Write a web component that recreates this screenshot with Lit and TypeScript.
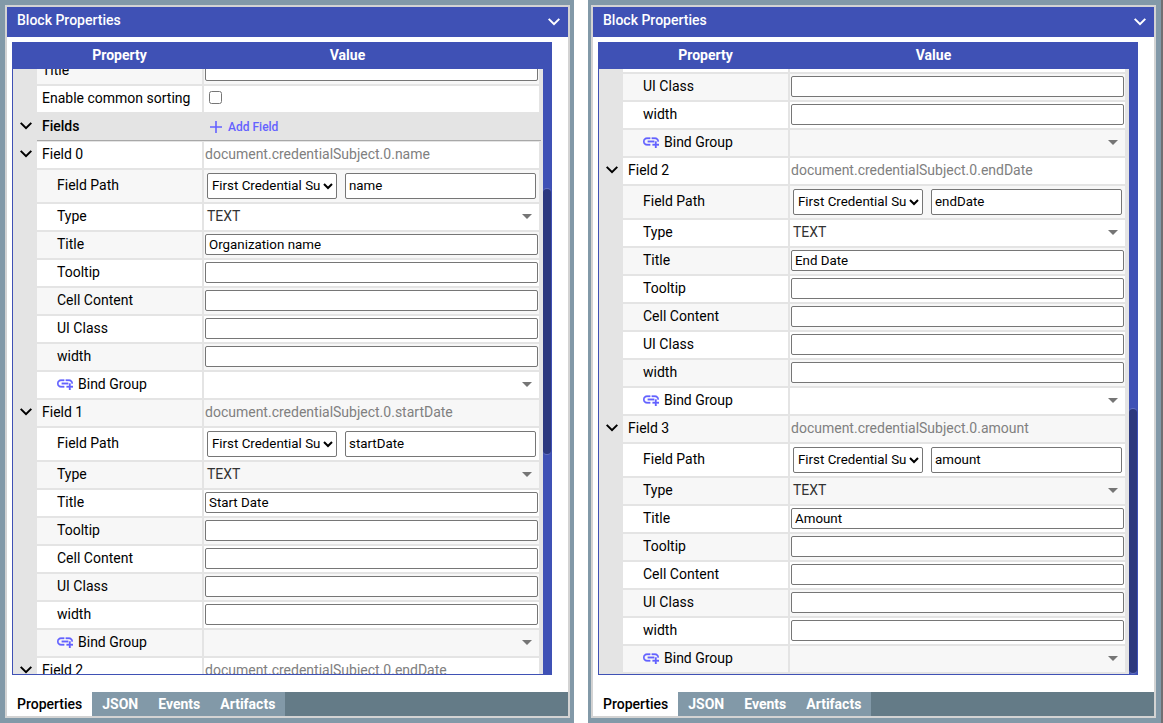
import { LitElement, html, css, nothing } from "lit";
import { customElement, property, state } from "lit/decorators.js";

type Kind = "input" | "check" | "section" | "field" | "path" | "type" | "bind";
interface Row {
  kind: Kind;
  label: string;
  value?: string;
  top?: boolean;
}
interface PanelData {
  id: string;
  rows: Row[];
  scroll: number;
  startWhite: boolean;
  thumbTop: number;
  thumbSize: number;
}

const fieldRows = (index: number, path: string, title: string): Row[] => [
  { kind: "field", label: `Field ${index}`, value: `document.credentialSubject.0.${path}` },
  { kind: "path", label: "Field Path", value: path },
  { kind: "type", label: "Type", value: "TEXT" },
  { kind: "input", label: "Title", value: title },
  { kind: "input", label: "Tooltip" },
  { kind: "input", label: "Cell Content" },
  { kind: "input", label: "UI Class" },
  { kind: "input", label: "width" },
  { kind: "bind", label: "Bind Group" },
];

const PANELS: PanelData[] = [
  {
    id: "left",
    scroll: 11,
    startWhite: false,
    thumbTop: 19.7,
    thumbSize: 44.1,
    rows: [
      { kind: "input", label: "Title", top: true },
      { kind: "check", label: "Enable common sorting", top: true },
      { kind: "section", label: "Fields" },
      ...fieldRows(0, "name", "Organization name"),
      ...fieldRows(1, "startDate", "Start Date"),
      ...fieldRows(2, "endDate", "End Date"),
    ],
  },
  {
    id: "right",
    scroll: 23,
    startWhite: true,
    thumbTop: 56,
    thumbSize: 44,
    rows: [
      ...fieldRows(1, "startDate", "Start Date").slice(5),
      ...fieldRows(2, "endDate", "End Date"),
      ...fieldRows(3, "amount", "Amount"),
    ],
  },
];

const chevron = html`<svg width="12" height="8" viewBox="6 8.4 12 8" aria-hidden="true">
  <path d="M7.41 8.59L12 13.17l4.59-4.58L18 10l-6 6-6-6z" fill="currentColor" />
</svg>`;

@customElement("block-panel")
export class BlockPanel extends LitElement {
  @property({ attribute: false }) data!: PanelData;
  @state() private tab = "Properties";

  static styles = css`
    :host {
      display: flex;
      flex-direction: column;
      min-width: 0;
      box-sizing: border-box;
      border: 2px solid #d3d3d3;
      background: #fff;
      font: 14px/20px Roboto, sans-serif;
      color: #000;
    }
    button {
      font: inherit;
      color: inherit;
      background: none;
      border: 0;
      padding: 0;
      margin: 0;
      cursor: pointer;
    }
    .head {
      display: flex;
      justify-content: space-between;
      align-items: center;
      height: 30px;
      padding: 0 8px 0 10px;
      box-sizing: border-box;
      background: #3f51b5;
      color: #fff;
    }
    .title {
      margin: 0;
      padding-bottom: 4px;
      font-size: 14px;
      font-weight: 500;
    }
    .collapse {
      display: flex;
    }
    .frame {
      flex: 1;
      min-height: 0;
      display: flex;
      flex-direction: column;
      margin: 5px 16px 17px 5px;
      border: solid #3f51b5;
      border-width: 0 0 1px 1px;
    }
    .columns {
      display: grid;
      grid-template-columns: 24px 165px 1fr;
      height: 27px;
      line-height: 27px;
      background: #3f51b5;
      color: #fff;
      font-weight: 700;
      text-align: center;
    }
    .columns .value {
      padding-right: 59px;
    }
    .body {
      flex: 1;
      min-height: 0;
      display: flex;
    }
    .scroller {
      flex: 1;
      min-width: 0;
      overflow-y: auto;
      scrollbar-width: none;
      background: #e4e4e4;
    }
    .track {
      width: 9px;
      background: #3f51b5;
    }
    .thumb {
      width: 8px;
      box-sizing: border-box;
      border-radius: 4px;
      background: #2c387e;
      border: solid #6573c3;
      border-width: 1px 0;
    }
    table,
    tbody {
      display: block;
    }
    tr {
      display: grid;
      grid-template-columns: 24px 165px 1fr;
      height: 26px;
      margin-bottom: 2px;
      padding-right: 4px;
    }
    tr.path {
      height: 32px;
    }
    td,
    th {
      display: flex;
      align-items: center;
      box-sizing: border-box;
      padding: 0;
      min-width: 0;
      text-align: left;
      font-weight: 400;
    }
    .toggle {
      justify-content: center;
      padding-left: 2px;
    }
    .toggle button {
      display: flex;
      padding-bottom: 2px;
    }
    .name {
      padding: 0 0 2px 20px;
      white-space: nowrap;
      background: #f7f7f7;
    }
    .value-cell {
      margin-left: 2px;
      padding: 0 1px;
      background: #f7f7f7;
    }
    .white .name,
    .white .value-cell {
      background: #fff;
    }
    .top .name,
    .field .name,
    .section .name {
      padding-left: 5px;
    }
    .section .name {
      font-weight: 500;
    }
    tr.section {
      height: 27px;
      margin-bottom: 1px;
      padding-right: 2px;
    }
    .section .name,
    .section .value-cell {
      background: #e4e4e4;
      border-bottom: 1px solid #a8a8a8;
    }
    .section .toggle {
      padding-bottom: 2px;
    }
    .section .value-cell {
      margin-left: 0;
      padding-left: 8px;
      padding-bottom: 1px;
    }
    .name svg {
      margin-right: 5px;
    }
    .add {
      display: flex;
      align-items: center;
      gap: 6px;
      color: #6462ff;
      font-size: 12px;
      font-weight: 500;
    }
    .field .value-cell {
      color: #808080;
      padding-bottom: 2px;
    }
    input[type="text"],
    .path select {
      box-sizing: border-box;
      min-width: 0;
      border: 1px solid #767676;
      border-radius: 2px;
      background: #fff;
      color: #000;
      font-family: Roboto, sans-serif;
    }
    input[type="text"] {
      flex: 1;
      height: 21px;
      padding: 0 3px;
      margin-bottom: 1px;
    }
    .path .value-cell {
      padding: 0 3px;
      gap: 8px;
    }
    .path input[type="text"],
    .path select {
      height: 26px;
      margin: 0;
      padding-bottom: 1px;
    }
    .path select {
      width: 130px;
    }
    input[type="checkbox"] {
      width: 13px;
      height: 13px;
      margin: 0 4px 3px;
    }
    .pick {
      display: flex;
      align-items: center;
      justify-content: space-between;
      flex: 1;
      height: 100%;
      padding: 0 6px 2px 2px;
      color: #333;
      text-align: left;
    }
    .tabs {
      display: flex;
      height: 24px;
      background: #647b87;
    }
    .tabs button {
      padding: 0 10px;
      background: #8299a8;
      color: #fff;
      font-weight: 700;
    }
    .tabs button.on {
      background: #fff;
      color: #000;
      font-weight: 500;
    }
  `;

  firstUpdated() {
    const scroller = this.renderRoot.querySelector(".scroller");
    if (scroller) scroller.scrollTop = this.data.scroll;
  }

  private pick(label: string, text: string) {
    return html`<button class="pick" aria-label=${label} aria-haspopup="listbox">
      <span>${text}</span>
      <svg width="10" height="5" viewBox="0 0 10 5" aria-hidden="true">
        <path d="M0 0H10L5 5Z" fill="#757575" />
      </svg>
    </button>`;
  }

  private value(row: Row, id: string) {
    switch (row.kind) {
      case "check":
        return html`<input type="checkbox" id=${id} />`;
      case "section":
        return html`<button class="add">
          <svg width="12" height="12" viewBox="0 0 12 12" aria-hidden="true">
            <path d="M6 0V12M0 6H12" stroke="currentColor" stroke-width="1.6" />
          </svg>
          Add Field
        </button>`;
      case "field":
        return row.value;
      case "path":
        return html`<select aria-label="Path root">
            <option>First Credential Subjects</option>
          </select>
          <input type="text" id=${id} .value=${row.value ?? ""} />`;
      case "type":
      case "bind":
        return this.pick(row.label, row.value ?? "");
      default:
        return html`<input type="text" id=${id} .value=${row.value ?? ""} />`;
    }
  }

  private row(row: Row, i: number) {
    const id = `p${i}`;
    const white = (i % 2 === 0) === this.data.startWhite;
    const opens = row.kind === "field" || row.kind === "section";
    const labelled = row.kind === "input" || row.kind === "check" || row.kind === "path";
    return html`<tr class="${row.kind} ${white ? "white" : ""} ${row.top ? "top" : ""}">
      <td class="toggle">
        ${opens ? html`<button aria-label="Toggle ${row.label}">${chevron}</button>` : nothing}
      </td>
      <th class="name" scope="row">
        ${row.kind === "bind"
          ? html`<svg width="16" height="11" viewBox="2 6.4 20 13.75" aria-hidden="true">
              <path
                d="M8 11h8v2H8v-2zm12.1 1H22c0-2.76-2.24-5-5-5h-4v1.9h4c1.71 0 3.1 1.39 3.1 3.1zM3.9 12c0-1.71 1.39-3.1 3.1-3.1h4V7H7c-2.76 0-5 2.24-5 5s2.24 5 5 5h4v-1.9H7c-1.71 0-3.1-1.39-3.1-3.1zM19 12h-2v3h-3v2h3v3h2v-3h3v-2h-3v-3z"
                fill="#6462ff" stroke="#6462ff" stroke-width="0.4" />
            </svg>`
          : nothing}
        ${labelled ? html`<label for=${id}>${row.label}</label>` : row.label}
      </th>
      <td class="value-cell">${this.value(row, id)}</td>
    </tr>`;
  }

  render() {
    return html`
      <header class="head">
        <h2 class="title">Block Properties</h2>
        <button class="collapse" aria-label="Collapse">${chevron}</button>
      </header>
      <div class="frame">
        <div class="columns">
          <span></span><span>Property</span><span class="value">Value</span>
        </div>
        <div class="body">
          <div class="scroller">
            <table><tbody>${this.data.rows.map((r, i) => this.row(r, i))}</tbody></table>
          </div>
          <div class="track">
            <div style="height:${this.data.thumbTop}%"></div>
            <div class="thumb" style="height:${this.data.thumbSize}%"></div>
          </div>
        </div>
      </div>
      <nav class="tabs">
        ${["Properties", "JSON", "Events", "Artifacts"].map(
          (t) => html`<button class=${t === this.tab ? "on" : ""} @click=${() => (this.tab = t)}>${t}</button>`
        )}
      </nav>
    `;
  }
}

@customElement("app-root")
export class AppRoot extends LitElement {
  static styles = css`
    :host {
      display: grid;
      grid-template-columns: 1fr 1fr;
      column-gap: 14px;
      height: 100vh;
      box-sizing: border-box;
      border-right: 1px solid #706f72;
      background: #fff;
    }
    .side {
      display: grid;
      min-width: 0;
      min-height: 0;
      padding: 5px 4px 5px 5px;
      background: #8299a8;
    }
    .side + .side {
      padding: 5px 5px 5px 3px;
      border-right: 1px solid #706f72;
    }
    block-panel {
      min-height: 0;
    }
  `;

  render() {
    return html`${PANELS.map((p) => html`<div class="side"><block-panel .data=${p}></block-panel></div>`)}`;
  }
}
